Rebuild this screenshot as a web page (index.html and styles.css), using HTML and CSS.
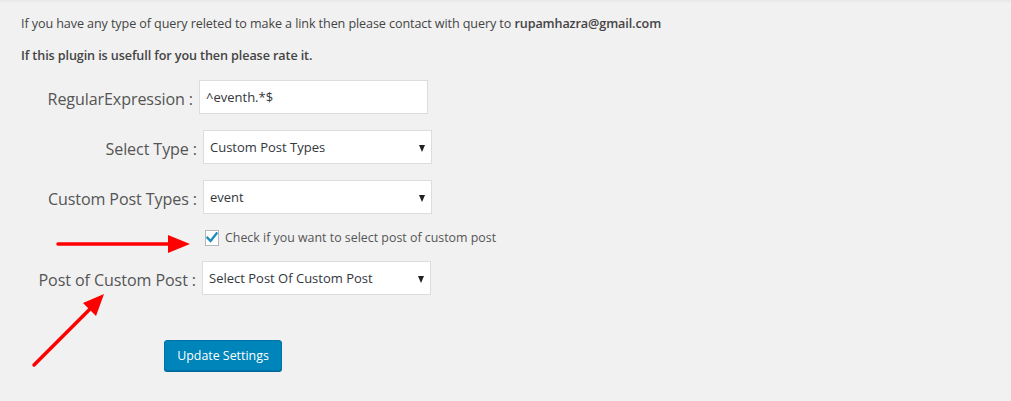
FILE: index.html
```html
<!DOCTYPE html>
<html lang="en">
<head>
<meta charset="utf-8">
<title>Settings</title>
<link rel="stylesheet" href="styles.css">
</head>
<body>
<div class="wrap">
  <p class="note">If you have any type of query releted to make a link then please contact with query to <strong>rupamhazra@gmail.com</strong></p>
  <p class="note strong">If this plugin is usefull for you then please rate it.</p>

  <form class="settings">
    <div class="row row-first">
      <label class="lbl" for="re">RegularExpression :</label>
      <input class="field" id="re" type="text" value="^eventh.*$">
    </div>
    <div class="row">
      <label class="lbl">Select Type :</label>
      <div class="select"><span>Custom Post Types</span><i class="caret"></i></div>
    </div>
    <div class="row">
      <label class="lbl">Custom Post Types :</label>
      <div class="select"><span>event</span><i class="caret"></i></div>
    </div>
    <div class="row row-check">
      <span></span>
      <label class="check">
        <span class="box"><svg width="12" height="11" viewBox="0 0 12 11"><path d="M1.5 5.8 L4.6 9 L10.6 1.4" fill="none" stroke="#1e8cbe" stroke-width="2.4" stroke-linecap="square"/></svg></span>
        Check if you want to select post of custom post
      </label>
    </div>
    <div class="row row-last">
      <label class="lbl">Post of Custom Post :</label>
      <div class="select"><span>Select Post Of Custom Post</span><i class="caret"></i></div>
    </div>
    <div class="actions">
      <button type="button" class="btn">Update Settings</button>
    </div>
  </form>

  <svg class="arrows" width="1011" height="401" viewBox="0 0 1011 401">
    <line x1="58" y1="242" x2="172" y2="242" stroke="#ff0000" stroke-width="3.5" stroke-linecap="round"/>
    <polygon points="168,233 190,242 168,251" fill="#ff0000"/>
    <line x1="34" y1="363" x2="92" y2="305" stroke="#ff0000" stroke-width="3.5" stroke-linecap="round"/>
    <polygon points="104,292 96,314 83,301" fill="#ff0000"/>
  </svg>
</div>
</body>
</html>
```
FILE: styles.css
```css
html, body {
  margin: 0;
  padding: 0;
  background: #f1f1f1;
}
body {
  border-top: 2px solid #e9e9e9;
  font-family: "Open Sans", "Noto Sans", sans-serif;
  color: #444;
}
.wrap {
  position: relative;
  width: 1011px;
  height: 399px;
  overflow: hidden;
}
.note {
  margin: 0;
  padding-left: 21px;
  font-size: 12.6px;
  line-height: 18px;
  letter-spacing: -0.1px;
}
.note:first-child {
  padding-top: 13px;
}
.note + .note {
  margin-top: 14px;
}
.note strong, .note.strong {
  font-weight: 600;
}
.settings {
  display: flex;
  flex-direction: column;
  margin-top: 15px;
}
.row {
  display: grid;
  grid-template-columns: 197px 229px;
  column-gap: 6px;
  align-items: center;
  margin-bottom: 16px;
}
.row-first {
  grid-template-columns: 193px 229px;
}
.row-check {
  margin-top: -1px;
  margin-bottom: 15px;
}
.row-last {
  grid-template-columns: 196px 229px;
}
.lbl {
  text-align: right;
  font-size: 16.1px;
  color: #555;
  letter-spacing: -0.1px;
  white-space: nowrap;
  padding-top: 4px;
}
.field {
  box-sizing: border-box;
  height: 34px;
  width: 229px;
  margin: 0;
  border: 1px solid #ddd;
  background: #fff;
  padding: 0 6px;
  font-family: inherit;
  font-size: 13px;
  color: #32373c;
  outline: none;
}
.select {
  position: relative;
  box-sizing: border-box;
  height: 34px;
  border: 1px solid #ddd;
  background: #fff;
  display: flex;
  align-items: center;
  padding: 0 6px;
  font-size: 13px;
  color: #32373c;
}
.caret {
  position: absolute;
  right: 6px;
  top: 14px;
  width: 0;
  height: 0;
  border-left: 3.5px solid transparent;
  border-right: 3.5px solid transparent;
  border-top: 7px solid #222;
}
.check {
  display: flex;
  align-items: center;
  gap: 6px;
  font-size: 12.4px;
  color: #555;
  margin-left: 2px;
  white-space: nowrap;
}
.box {
  box-sizing: border-box;
  width: 16px;
  height: 16px;
  border: 1px solid #b4b9be;
  background: #fff;
  display: flex;
  align-items: center;
  justify-content: center;
}
.actions {
  padding-left: 164px;
  margin-top: 29px;
}
.btn {
  box-sizing: border-box;
  height: 31px;
  width: 118px;
  background: #0085ba;
  border: 1px solid #0073aa;
  border-radius: 3px;
  box-shadow: 0 1px 0 #006799;
  color: #fff;
  font-family: inherit;
  font-size: 12.4px;
  padding: 0;
}
.arrows {
  position: absolute;
  left: 0;
  top: 0;
  pointer-events: none;
}
```
